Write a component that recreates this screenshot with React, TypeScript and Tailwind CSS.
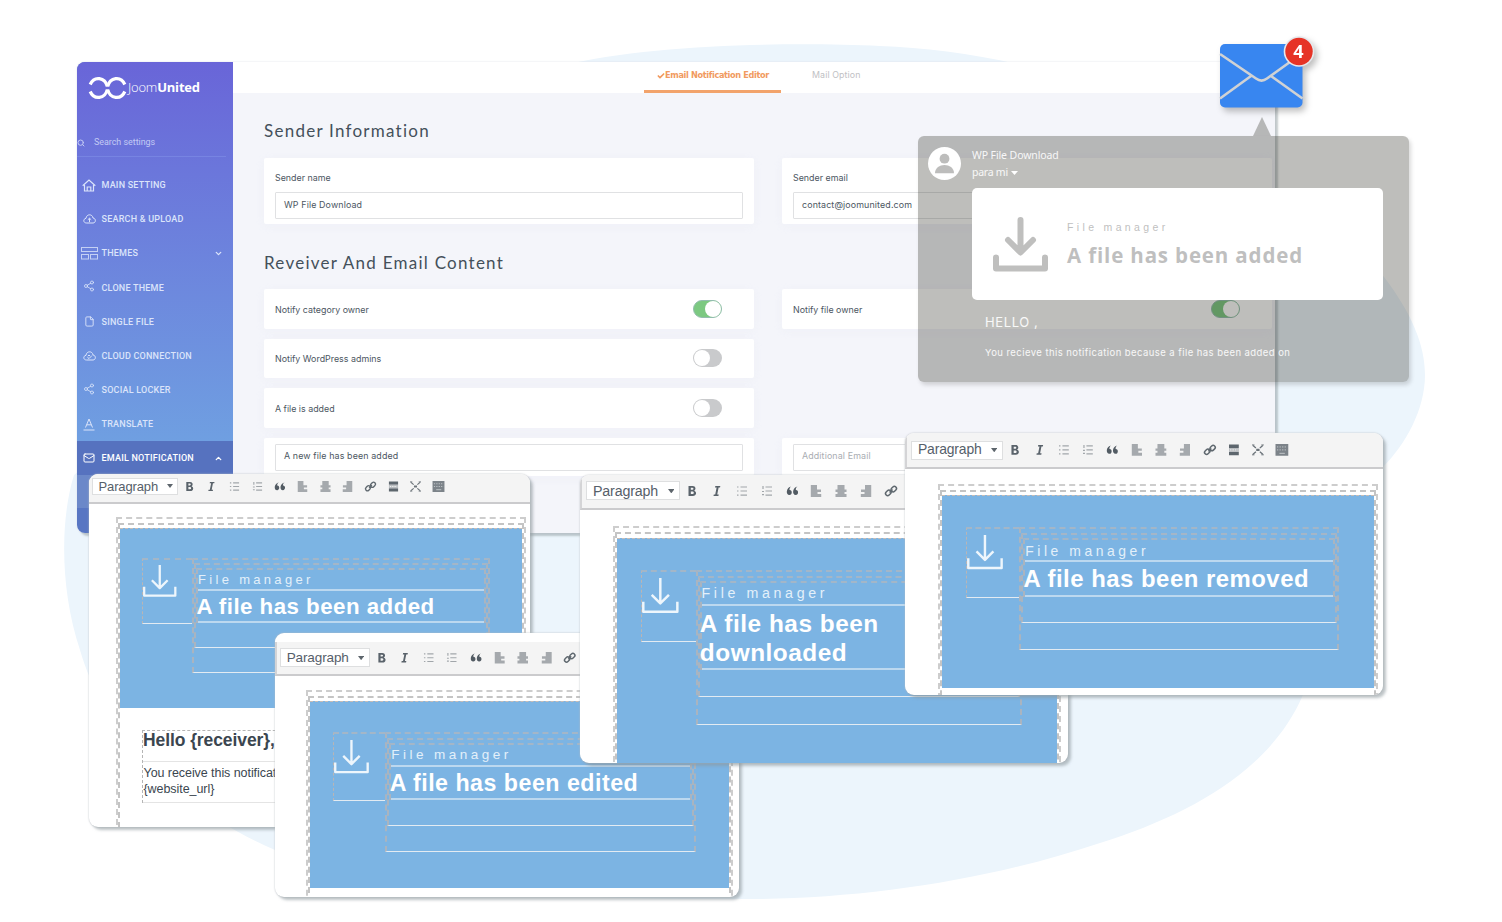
import type { ReactNode } from "react";
import clsx from "clsx";
import { Check, ChevronDown, ChevronUp, File, Mail, Search, Share2 } from "lucide-react";

const menu: { label: string; icon: ReactNode; chevron?: "up" | "down" }[] = [
  { label: "MAIN SETTING", icon: <HomeIcon /> },
  { label: "SEARCH & UPLOAD", icon: <CloudIcon arrow /> },
  { label: "THEMES", icon: <ThemesIcon />, chevron: "down" },
  { label: "CLONE THEME", icon: <ShareIcon /> },
  { label: "SINGLE FILE", icon: <File size={11} strokeWidth={2} /> },
  { label: "CLOUD CONNECTION", icon: <CloudIcon /> },
  { label: "SOCIAL LOCKER", icon: <ShareIcon /> },
  { label: "TRANSLATE", icon: <TranslateIcon /> },
  { label: "EMAIL NOTIFICATION", icon: <Mail size={12} strokeWidth={2} />, chevron: "up" },
];

function HomeIcon() {
  return (
    <svg width="14" height="13" viewBox="0 0 14 13" fill="none" stroke="currentColor" strokeWidth="1.2">
      <path d="M.7 6.8 7 1l6.300 5.800" />
      <path d="M2.500 5.800V12h9V5.800M5.200 12V8h3.600v4" />
    </svg>
  );
}

function ShareIcon() {
  return <Share2 size={12} strokeWidth={1.6} className="mb-[3px]" />;
}

function CloudIcon({ arrow }: { arrow?: boolean }) {
  return (
    <svg className="mb-px" width="13" height="10" viewBox="0 0 13 10" fill="none" stroke="currentColor">
      <path d="M3.500 9C.2 9-.2 5 3 4.300 3.500-.3 9.500-.3 10 4c3.300.4 3 5 0 5z" />
      {arrow ? <path d="M6.500 8V4.300M4.800 5.800l1.700-1.600 1.700 1.600" /> : <path d="m4.300 6 1.700 1.600L9 4.500M5 4.500h2" />}
    </svg>
  );
}

function ThemesIcon() {
  return (
    <svg className="mb-px" width="17" height="13" viewBox="0 0 17 13" fill="none" stroke="currentColor" strokeOpacity=".8">
      <rect x=".5" y=".5" width="16" height="4" />
      <rect x=".5" y="7.500" width="7" height="4.500" />
      <rect x="9.500" y="7.500" width="7" height="4.500" />
    </svg>
  );
}

function TranslateIcon() {
  return (
    <svg width="12" height="13" viewBox="0 0 12 13" fill="none" stroke="currentColor">
      <path d="M2.500 9.500 6 1l3.500 8.500M3.800 6.800h4.400M.5 12h11" />
    </svg>
  );
}

function Logo() {
  return (
    <div className="flex items-center">
      <svg width="39" height="26" viewBox="0 0 39 26" fill="none" stroke="#fff" strokeWidth="3.200">
        <path d="M2.200 9.500A9.200 10.800 0 0 1 19.300 11.500M2.200 16.500A9.200 10.800 0 0 0 19.300 14.500" />
        <path d="M36.800 9.500A9.200 10.800 0 0 0 19.700 11.500M36.800 16.500A9.200 10.800 0 0 1 19.700 14.500" />
      </svg>
      <span className="ml-px font-['Open_Sans'] text-[13px] tracking-[-0.200px] text-white">
        <span className="font-light">Joom</span>
        <span className="font-bold">United</span>
      </span>
    </div>
  );
}

function Sidebar() {
  return (
    <aside className="flex w-[156px] shrink-0 flex-col overflow-hidden rounded-l-[8px] bg-[#5876c3] font-['Roboto'] text-[#dbe4fa]">
      <div className="h-[379px] bg-linear-to-b from-[#6965d8] to-[#6f9fe1]">
        <div className="h-[67px] pt-[13px] pl-[11px]">
          <Logo />
        </div>
        <div className="mr-[7px] flex h-7 items-center gap-[9px] border-b border-[#7784e2] text-[8.900px] text-[#c3caf4]">
          <Search size={8} strokeWidth={3} />
          Search settings
        </div>
        <nav className="pt-[11px]">
          {menu.map((item) => (
            <div
              key={item.label}
              className={clsx(
                "flex h-[34.100px] items-center pt-px text-[9px] font-medium tracking-[0.220px]",
                item.chevron === "up" && "bg-[#5672bf] text-white",
              )}
            >
              <span className="flex w-6 justify-center">{item.icon}</span>
              <span className="pt-px pl-[0.500px]">{item.label}</span>
              {item.chevron === "down" && <ChevronDown size={9} strokeWidth={3.500} className="mr-[10px] ml-auto" />}
              {item.chevron === "up" && <ChevronUp size={9} strokeWidth={3.500} className="mr-[10px] ml-auto" />}
            </div>
          ))}
        </nav>
      </div>
      <div className="mt-[34px] h-[33px] bg-[#6b88c9]" />
    </aside>
  );
}

function Toggle({ on }: { on?: boolean }) {
  return (
    <div
      className={clsx(
        "flex h-[18px] w-[29px] rounded-full",
        on ? "justify-end border border-[#93bdae] bg-[#7cc981]" : "bg-[#c9cacc] p-px",
      )}
    >
      <div className="size-4 rounded-full bg-white" />
    </div>
  );
}

function Panel({ children, className }: { children: ReactNode; className?: string }) {
  return (
    <div className={clsx("rounded-[2px] bg-white px-[11px] text-[8.900px] text-[#4c565f] shadow-[0_2px_8px_#e9eaf466]", className)}>
      {children}
    </div>
  );
}

function Field({ value, muted }: { value: string; muted?: boolean }) {
  return (
    <div
      className={clsx(
        "flex h-[27px] items-center rounded-[1px] border border-[#e0e1e3] bg-white pb-[2px] pl-2 tracking-[0.120px]",
        muted && "text-[#a9adb2]",
      )}
    >
      {value}
    </div>
  );
}

function SwitchRow({ label, on }: { label: string; on?: boolean }) {
  return (
    <Panel className="flex h-[39.500px] items-center justify-between">
      <span className="pt-px">{label}</span>
      <span className="mr-[21px]">
        <Toggle on={on} />
      </span>
    </Panel>
  );
}

function Heading({ children, className }: { children: ReactNode; className: string }) {
  return (
    <h2 className={clsx("h-6 font-['Lato'] text-[17px] leading-6 tracking-[1.250px] text-[#44505a]", className)}>{children}</h2>
  );
}

function SettingsWindow() {
  return (
    <div className="absolute top-[62px] left-[77px] flex h-[471px] w-[1198px] rounded-[8px] shadow-[3px_3px_2px_#8c979b80,0_0_2px_#d9dde2]">
      <Sidebar />
      <main className="min-w-0 flex-1 overflow-hidden rounded-r-[8px] bg-[#f4f5fa] font-['Inter']">
        <header className="flex h-[31px] bg-white text-[8.800px]">
          <div className="ml-[411px] flex w-[137px] items-center justify-center border-b-[3px] border-[#f2a36b] pb-px pl-px font-['DejaVu_Sans'] text-[8.200px] font-bold tracking-[-0.360px] text-[#f19a60]">
            <Check size={8} strokeWidth={5} />
            <span>Email Notification Editor</span>
          </div>
          <div className="ml-[31px] pt-[6px] tracking-[0.120px] text-[#bfc1c4]">Mail Option</div>
        </header>
        <div className="pl-[31px]">
          <Heading className="mt-[26px]">Sender Information</Heading>
          <div className="mt-[15px] grid grid-cols-[490px_490px] gap-7">
            <Panel className="h-[66px] pt-[14px]">
              <div className="mb-[8px] h-3 leading-3">Sender name</div>
              <Field value="WP File Download" />
            </Panel>
            <Panel className="h-[66px] pt-[14px]">
              <div className="mb-[8px] h-3 leading-3">Sender email</div>
              <Field value="contact@joomunited.com" />
            </Panel>
          </div>
          <Heading className="mt-[27px]">Reveiver And Email Content</Heading>
          <div className="mt-[14px] grid grid-cols-[490px_490px] gap-x-7 gap-y-[10px]">
            <SwitchRow label="Notify category owner" on />
            <SwitchRow label="Notify file owner" on />
            <div className="space-y-[10px]">
              <SwitchRow label="Notify WordPress admins" />
              <SwitchRow label="A file is added" />
            </div>
            <div />
            <Panel className="h-[38px] pt-[6px]">
              <Field value="A new file has been added" />
            </Panel>
            <Panel className="h-[38px] pt-[6px]">
              <Field value="Additional Email" muted />
            </Panel>
          </div>
        </div>
      </main>
    </div>
  );
}

/* toolbar glyphs, all on a 12x12 grid */
const toolIcons: ReactNode[] = [
  <path key="b" d="M2.500 1h4.200c3.200 0 3.600 3.800 1.400 4.700 3 .9 2.500 5.300-1.200 5.300H2.500V1zm2.300 1.800v2h1.500c1.500 0 1.500-2 0-2H4.800zm0 3.700v2.600h1.700c1.700 0 1.700-2.600 0-2.600H4.800z" fill="#5a636b" />,
  <path key="i" d="M4.300 1h5l-.3 1.500H7.600L6.200 9.500h1.500L7.400 11H2.500l.3-1.500h1.400l1.400-7H4z" fill="#5a636b" />,
  <path key="ul" d="M1 2h1.500M1 6h1.500M1 10h1.500M4.500 2H11M4.500 6H11M4.500 10H11" stroke="#a1a6aa" strokeWidth="1.200" />,
  <path key="ol" d="M2 1v3M1 6.500h2M1 9.500h2M4.500 2H11M4.500 6H11M4.500 10H11" stroke="#a1a6aa" strokeWidth="1.200" />,
  <path key="q" d="M5.500 1.500C3.800 2 3.400 3.600 3.500 5c3-.2 3 5 0 5C-.6 10 0 2 5.500 1.500zM11.800 1.500C10 2 9.700 3.600 9.800 5c3-.2 3 5 0 5-4.100 0-3.500-8 2-8.500z" fill="#525b63" />,
  <path key="al" d="M.8 0h6.200v4.500h4v2.500H7.500v2H11.200V12H.8z" fill="#a5a9ad" />,
  <path key="ac" d="M2.500 0h7v4.500h2v2.500h-2v2h2V12h-11V9h2V7h-2V4.500h2z" fill="#a5a9ad" />,
  <path key="ar" d="M11.200 0H5v4.500H1v2.500h3.500v2H.8V12h10.400z" fill="#a5a9ad" />,
  <g key="ln" fill="none" stroke="#5f686f" strokeWidth="1.500">
    <rect x="5.700" y="2" width="6" height="4.200" rx="2.100" transform="rotate(-45 8.700 4.100)" />
    <rect x=".3" y="5.800" width="6" height="4.200" rx="2.100" transform="rotate(-45 3.300 7.900)" />
    <path d="M4.500 7.500 7.500 4.500" />
  </g>,
  <g key="rm">
    <path d="M1 .5h10v3.500H1zM1 8h10v3.500H1z" fill="#5d666d" />
    <path d="M1 4h10v4H1z" fill="#b9bdc0" />
    <path d="M2 6h8" stroke="#f4f4f4" strokeDasharray="1.500 1" />
  </g>,
  <g key="fs" stroke="#6a7278" strokeWidth="1.300">
    <path d="M1 1.500 4 4M11 1.500 8 4M1 10.500 4 8M11 10.500 8 8" />
    <path d="M4.300 6h3.400" strokeWidth="2.400" />
    <path d="M0 1h2.500M9.500 1H12M0 11h2.500M9.500 11H12" strokeWidth="1" />
  </g>,
  <g key="kb">
    <path d="M-.5 0h13v12h-13z" fill="#7c8389" />
    <path d="M1 3h10.500M1 6h10.500" stroke="#c3c7ca" strokeDasharray="1.300 1.300" />
    <path d="M3.500 9.500h5.500" stroke="#c3c7ca" />
  </g>,
];

function Toolbar({ className }: { className?: string }) {
  return (
    <div className={clsx("flex shrink-0 items-end border-b-2 border-[#cbcbcd] bg-[#f4f4f4] pb-[0.700em]", className)}>
      <div className="flex h-[1.750em] w-[8.600em] shrink-0 items-center justify-between border border-[#dedfe0] bg-white pr-[0.450em] pl-[0.550em]">
        <span className="text-[1.300em] leading-none tracking-[-0.010em] text-[#56606a]">Paragraph</span>
        <svg className="h-[0.400em] w-[0.600em]" viewBox="0 0 6 4" fill="#5d656c">
          <path d="M0 0h6L3 4z" />
        </svg>
      </div>
      {toolIcons.map((icon, i) => (
        <span key={i} className="flex h-[1.750em] w-[2.265em] shrink-0 items-center justify-center">
          <svg className="h-[1.100em] w-[1.100em] overflow-visible" viewBox="0 0 12 12">
            {icon}
          </svg>
        </span>
      ))}
    </div>
  );
}

function DownloadGlyph() {
  return (
    <svg
      className="mt-[0.450em] h-[3.350em] w-[3.350em] text-[#eef6fc]"
      viewBox="0 0 34 34"
      fill="none"
      stroke="currentColor"
      strokeWidth="2.300"
      strokeLinejoin="round"
    >
      <path d="M17 1v23M9 16.500l8 8 8-8" />
      <path d="M1.200 23v9.200h31.600V23" />
    </svg>
  );
}

/* visual-aid borders of the table based mail template */
const aid = "border-x-2 border-t-2 border-dashed border-x-[#a9b4c0] border-t-[#a3b6c8]";
const rule = "border-b border-b-[#e3ebf2] [border-bottom-style:solid]";

function MailHead({ title }: { title: string }) {
  return (
    <div className="flex items-start border-t border-dashed border-[#c8bdb6] bg-[#7cb4e3] pt-[2.850em] pr-[3.200em] pb-[3.500em] pl-[2.200em]">
      <div className={clsx("h-[6.600em] w-[5em] shrink-0 border-t-2 border-l border-dashed border-t-[#a3b6c8] border-l-[#b9b5b5]", rule)}>
        <DownloadGlyph />
      </div>
      <div className={clsx(aid, rule, "flex-1 pt-[0.350em] pb-[2.400em]")}>
        <div className={clsx(aid, rule, "pt-[0.300em] pb-[2.400em]")}>
          <div className={aid}>
            <div className="h-[2.100em] border-b-2 border-[#bcd8ef] pt-[0.330em]">
              <span className="block text-[1.300em] leading-[1.100] tracking-[0.255em] whitespace-nowrap text-[#e3f0fa]">File manager</span>
            </div>
            <div className="border-b-2 border-[#bcd8ef] pt-[0.270em] pb-[0.030em]">
              <span className="-ml-[0.070em] block text-[2.230em] leading-[1.210] font-bold tracking-[0.021em] text-white">{title}</span>
            </div>
          </div>
        </div>
      </div>
    </div>
  );
}

interface EditorProps {
  title: string;
  className: string;
  toolbar: string;
  frame: string;
  children?: ReactNode;
}

// Everything inside is sized in em, so the font size set on the window scales it.
function EditorWindow({ title, className, toolbar, frame, children }: EditorProps) {
  return (
    <section
      className={clsx(
        "absolute flex flex-col overflow-hidden rounded-[9px] bg-white font-['Liberation_Sans'] shadow-[3px_3px_3px_#8c979b90,0_0_2px_#b8bdc2]",
        className,
      )}
    >
      <Toolbar className={toolbar} />
      <div className={clsx("h-[60em] w-[41em] shrink-0", frame)}>
        <div className="h-full border-x-2 border-t-2 border-dashed border-[#cdcdcd] pt-[0.400em]">
          <div className="h-full border-x-2 border-t-2 border-dashed border-[#c4c4c4] pt-[0.300em]">
            <MailHead title={title} />
            {children}
          </div>
        </div>
      </div>
    </section>
  );
}

function MailPopup() {
  return (
    <div className="absolute top-[117px] left-[918px] w-[491px] font-['Open_Sans'] text-white">
      <div className="ml-[335px] h-[19px] w-[18px] bg-[#28271f]/30 [clip-path:polygon(50%_0,100%_100%,0_100%)]" />
      <div className="h-[246px] rounded-[6px] bg-[#28271f]/30 px-[10px] pt-[11px] shadow-[2px_3px_4px_#00000026]">
        <div className="flex">
          <svg width="33" height="33" viewBox="0 0 33 33">
            <circle cx="16.500" cy="16.500" r="16.500" fill="#fff" />
            <circle cx="16.500" cy="11.700" r="4.900" fill="#bdbdbc" />
            <path d="M7 26.200c0-11 19-11 19 0z" fill="#bdbdbc" />
          </svg>
          <div className="ml-[11px] font-['Noto_Sans'] text-[10.500px] leading-[17px] tracking-[-0.100px] text-white/90">
            <div>WP File Download</div>
            <div className="flex items-center gap-[3px]">
              <span className="tracking-[-0.250px]">para mi</span>
              <svg width="7" height="4" viewBox="0 0 7 4" fill="#fff">
                <path d="M0 0h7L3.500 4z" />
              </svg>
            </div>
          </div>
        </div>
        <div className="mt-[7px] ml-[44px] flex h-[112px] w-[411px] items-center rounded-[5px] bg-white pl-5 text-[#bfbfbf]">
          <svg width="57" height="57" viewBox="0 0 57 57" fill="none" stroke="#bfbfbe" strokeWidth="6" strokeLinecap="round" strokeLinejoin="round">
            <path d="M28.500 4v31M16 24l12.500 12.500L41 24" />
            <path d="M4 41.500v11h49v-11" />
          </svg>
          <div className="ml-[18px]">
            <div className="font-['Liberation_Sans'] text-[10.500px] leading-4 tracking-[3.350px]">File manager</div>
            <div className="mt-[6px] text-[20.500px] leading-7 font-bold tracking-[0.850px]">A file has been added</div>
          </div>
        </div>
        <div className="mt-[13px] ml-[57px] font-['Inter'] text-[13px] leading-[18px] tracking-[0.600px] text-white/90">HELLO ,</div>
        <div className="mt-[14px] ml-[57px] font-['Inter'] text-[9.500px] leading-4 tracking-[0.440px] whitespace-nowrap text-white/90">
          You recieve this notification because a file has been added on
        </div>
      </div>
    </div>
  );
}

function MailBadge() {
  return (
    <svg
      className="absolute top-[30px] left-[1210px] drop-shadow-[3px_4px_3px_#00000040]"
      width="115"
      height="90"
      viewBox="0 0 115 90"
    >
      <rect x="10" y="14" width="82.500" height="63.500" rx="5" fill="#3886f0" />
      <path d="M10 24 46 48.500c4 3 7 3 11 0L92.500 23M10 68.500l31-22.500M92.500 68.500 61 46" fill="none" stroke="#d0d2d4" strokeWidth="2.600" />
      <circle cx="89" cy="21.500" r="15.300" fill="#e6e8ec" />
      <circle cx="89" cy="21.500" r="13.700" fill="#e63326" />
      <text x="88.500" y="27.500" textAnchor="middle" className="fill-white font-['Open_Sans'] text-[18px] font-bold">
        4
      </text>
    </svg>
  );
}

export default function App() {
  return (
    <div className="relative h-[922px] w-[1502px] overflow-hidden bg-white">
      <svg className="absolute inset-0" width="1502" height="922" viewBox="0 0 1502 922">
        <path
          d="M560 66C650 44 790 42 880 46C980 50 1110 74 1200 150C1270 205 1350 232 1384 277C1412 314 1425 345 1425 375C1425 410 1405 445 1383 467C1330 535 1335 630 1302 697C1270 770 1190 815 1100 843C990 880 860 900 739 899C560 900 380 890 275 850C160 800 100 720 80 650C60 590 60 520 74 475Z"
          fill="#ecf5fc"
        />
      </svg>

      <SettingsWindow />

      <EditorWindow
        title="A file has been added"
        className="top-[474px] left-[89px] h-[353px] w-[441px] text-[10px]"
        toolbar="h-[30px] pl-[3px]"
        frame="mt-[1.300em] ml-[2.700em]"
      >
        <div className="mt-[2.250em] mr-[3em] ml-[2.200em] border-t border-l border-dashed border-[#b5b5b5] text-[#3b4650]">
          <div className="h-[3.100em] border-b border-[#e4e4e4]">
            <span className="block text-[1.750em] leading-[1.100] font-bold tracking-[-0.005em]">Hello {"{receiver}"},</span>
          </div>
          <div className="h-[4.100em] border-b border-[#e4e4e4] pt-[0.300em] pl-[0.050em]">
            <p className="text-[1.250em] leading-[1.280] tracking-[-0.005em]">
              You receive this notification
              <br />
              {"{website_url}"}
            </p>
          </div>
        </div>
      </EditorWindow>

      <EditorWindow
        title="A file has been edited"
        className="top-[633px] left-[275px] h-[264px] w-[464px] border-t-[9px] border-t-white text-[10.420px]"
        toolbar="h-[34px] border-l-2 border-l-[#d4d4d6] pl-[3px]"
        frame="mt-[1.350em] ml-[3em]"
      />

      <EditorWindow
        title="A file has been downloaded"
        className="top-[475px] left-[580px] h-[288px] w-[488px] text-[10.940px]"
        toolbar="h-[35px] border-l-2 border-l-[#d4d4d6] pl-[4px]"
        frame="mt-[1.450em] ml-[3em]"
      />

      <EditorWindow
        title="A file has been removed"
        className="top-[433px] left-[905px] h-[262px] w-[478px] text-[10.720px]"
        toolbar="h-[36px] border-l-2 border-l-[#d4d4d6] pl-[4px]"
        frame="mt-[1.400em] ml-[3.080em]"
      />

      <MailPopup />
      <MailBadge />
    </div>
  );
}
